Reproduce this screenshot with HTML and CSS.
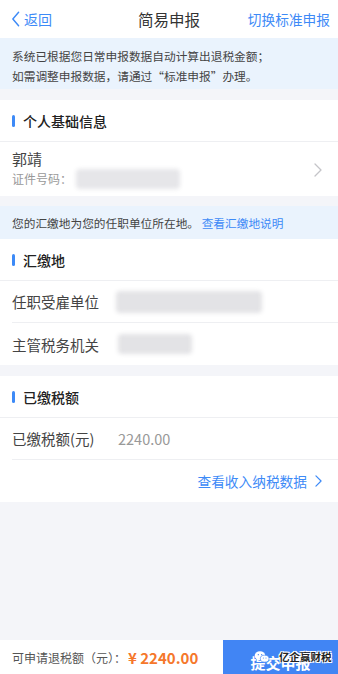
FILE: index.html
```html
<!DOCTYPE html>
<html lang="zh">
<head>
<meta charset="utf-8">
<link rel="stylesheet" href="styles.css">
</head>
<body>
<div class="page">
  <header class="nav">
    <div class="nav-back">
      <svg class="back-icon" viewBox="0 0 10 18" width="9" height="16"><path d="M8.5 1.5 L2 9 L8.5 16.5" fill="none" stroke="#3d8af7" stroke-width="1.6" stroke-linecap="round" stroke-linejoin="round"/></svg>
      <span>返回</span>
    </div>
    <div class="nav-title">简易申报</div>
    <div class="nav-right">切换标准申报</div>
  </header>

  <div class="notice notice-top">
    <p>系统已根据您日常申报数据自动计算出退税金额；</p>
    <p>如需调整申报数据，请通过“标准申报”办理。</p>
  </div>

  <section class="card">
    <div class="sec-head"><i class="bar"></i>个人基础信息</div>
    <div class="person">
      <div class="person-info">
        <div class="person-name">郭靖</div>
        <div class="person-id">证件号码：<span class="blur blur-id"></span></div>
      </div>
      <svg class="chev" viewBox="0 0 8 14" width="8" height="14"><path d="M1 1 L7 7 L1 13" fill="none" stroke="#c4c4c8" stroke-width="1.3" stroke-linecap="round" stroke-linejoin="round"/></svg>
    </div>
  </section>

  <div class="notice notice-mid">
    您的汇缴地为您的任职单位所在地。 <span class="link">查看汇缴地说明</span>
  </div>

  <section class="card card-flush">
    <div class="sec-head"><i class="bar"></i>汇缴地</div>
    <div class="row row-line"><span class="label">任职受雇单位</span><span class="blur blur-co"></span></div>
    <div class="row"><span class="label">主管税务机关</span><span class="blur blur-tax"></span></div>
  </section>

  <section class="card">
    <div class="sec-head"><i class="bar"></i>已缴税额</div>
    <div class="row row-line"><span class="label">已缴税额(元)</span><span class="value">2240.00</span></div>
    <div class="more">查看收入纳税数据
      <svg viewBox="0 0 8 14" width="7" height="12"><path d="M1 1 L7 7 L1 13" fill="none" stroke="#3d8af7" stroke-width="1.4" stroke-linecap="round" stroke-linejoin="round"/></svg>
    </div>
  </section>

  <div class="spacer"></div>

  <footer class="bottom">
    <div class="refund">可申请退税额（元）：<span class="amount">¥ 2240.00</span></div>
    <div class="submit">
      <span class="submit-text">提交申报</span>
      <div class="wm">
        <svg class="wm-icon" viewBox="0 0 24 20" width="16" height="14"><ellipse cx="9" cy="8" rx="8" ry="6.5" fill="#fff"/><ellipse cx="16" cy="12.5" rx="6.5" ry="5.2" fill="#fff" stroke="#4185f4" stroke-width="1"/><circle cx="6.5" cy="6.5" r="1" fill="#4185f4"/><circle cx="11.5" cy="6.5" r="1" fill="#4185f4"/><circle cx="14" cy="11.5" r=".8" fill="#4185f4"/><circle cx="18" cy="11.5" r=".8" fill="#4185f4"/></svg>
        <span class="wm-text">亿企赢财税</span>
      </div>
    </div>
  </footer>
</div>
</body>
</html>
```

FILE: styles.css
```css
* { box-sizing: border-box; margin: 0; padding: 0; }
html, body { width: 338px; height: 674px; overflow: hidden; }
body {
  background: #f4f5f9;
  font-family: "Noto Sans CJK SC", "Noto Sans", sans-serif;
  color: #333;
}
.page { display: flex; flex-direction: column; height: 674px; }

.nav {
  height: 38px;
  background: #fff;
  display: flex;
  align-items: center;
  justify-content: space-between;
  padding: 0 8px 0 11px;
  position: relative;
}
.nav-back { display: flex; align-items: center; gap: 4px; color: #3d8af7; font-size: 14px; }
.back-icon { display: block; }
.nav-title {
  position: absolute; left: 0; right: 0; text-align: center;
  font-size: 15.5px; color: #333; pointer-events: none;
}
.nav-right { color: #3d8af7; font-size: 13.7px; }

.notice {
  background: #eaf3fd;
  color: #444;
  font-size: 11.7px;
  padding: 0 12px;
}
.notice-top { height: 51px; padding-top: 4px; line-height: 19.5px; display: flex; flex-direction: column; justify-content: center; }
.notice-mid { height: 33px; line-height: 33px; margin-top: 10px; }
.link { color: #3d8af7; }

.card { background: #fff; margin-top: 11px; }
.card-flush { margin-top: 0; }

.sec-head {
  height: 42px;
  display: flex;
  align-items: center;
  font-size: 14px;
  font-weight: 500;
  color: #222;
  padding-left: 12px;
  border-bottom: 1px solid #eeeff2;
}
.bar { width: 3px; height: 12px; border-radius: 2px; background: #3d8af7; margin-right: 8px; display: block; }

.person {
  height: 54px;
  display: flex;
  align-items: center;
  justify-content: space-between;
  padding: 0 16px 0 12px;
}
.person-name { font-size: 15px; color: #444; line-height: 20px; }
.person-id { font-size: 12px; color: #999; line-height: 18px; display: flex; align-items: center; }
.chev { display: block; margin-top: 2px; }

.row {
  height: 42px;
  display: flex;
  align-items: center;
  margin-left: 12px;
  font-size: 14.5px;
}
.row-line { border-bottom: 1px solid #eeeff2; }
.label { color: #444; width: 106px; flex: none; }
.value { color: #999; }

.blur {
  display: inline-block;
  background: #e3e3e6;
  filter: blur(2px);
  border-radius: 4px;
}
.blur-id { width: 104px; height: 20px; margin-left: 4px; background: #e6e6e9; }
.blur-co { width: 146px; height: 22px; margin-left: -2px; }
.blur-tax { width: 74px; height: 20px; }

.more {
  height: 42px;
  display: flex;
  align-items: center;
  justify-content: flex-end;
  gap: 8px;
  padding-right: 16px;
  color: #3d8af7;
  font-size: 13.7px;
}
.more svg { display: block; }

.spacer { flex: 1; }

.bottom {
  height: 34px;
  background: #fff;
  display: flex;
  align-items: stretch;
}
.refund {
  flex: 1;
  display: flex;
  align-items: center;
  padding-left: 12px;
  font-size: 12px;
  color: #555;
}
.amount { color: #f5772b; font-weight: 700; font-size: 15px; margin-left: 2px; }
.submit {
  width: 115px;
  flex: none;
  background: #4185f4;
  position: relative;
  display: flex;
  align-items: center;
  justify-content: center;
  overflow: hidden;
}
.submit-text { color: #fff; font-size: 15px; font-weight: 700; padding-top: 10px; }
.wm {
  position: absolute;
  left: 31px;
  top: 9px;
  display: flex;
  align-items: center;
  gap: 9px;
  white-space: nowrap;
}
.wm-icon { display: block; }
.wm-text {
  color: #222;
  font-size: 10.5px;
  font-weight: 700;
  white-space: nowrap;
  text-shadow: 1px 1px 0 #fff, -1px -1px 0 #fff, 1px -1px 0 #fff, -1px 1px 0 #fff;
}
```
